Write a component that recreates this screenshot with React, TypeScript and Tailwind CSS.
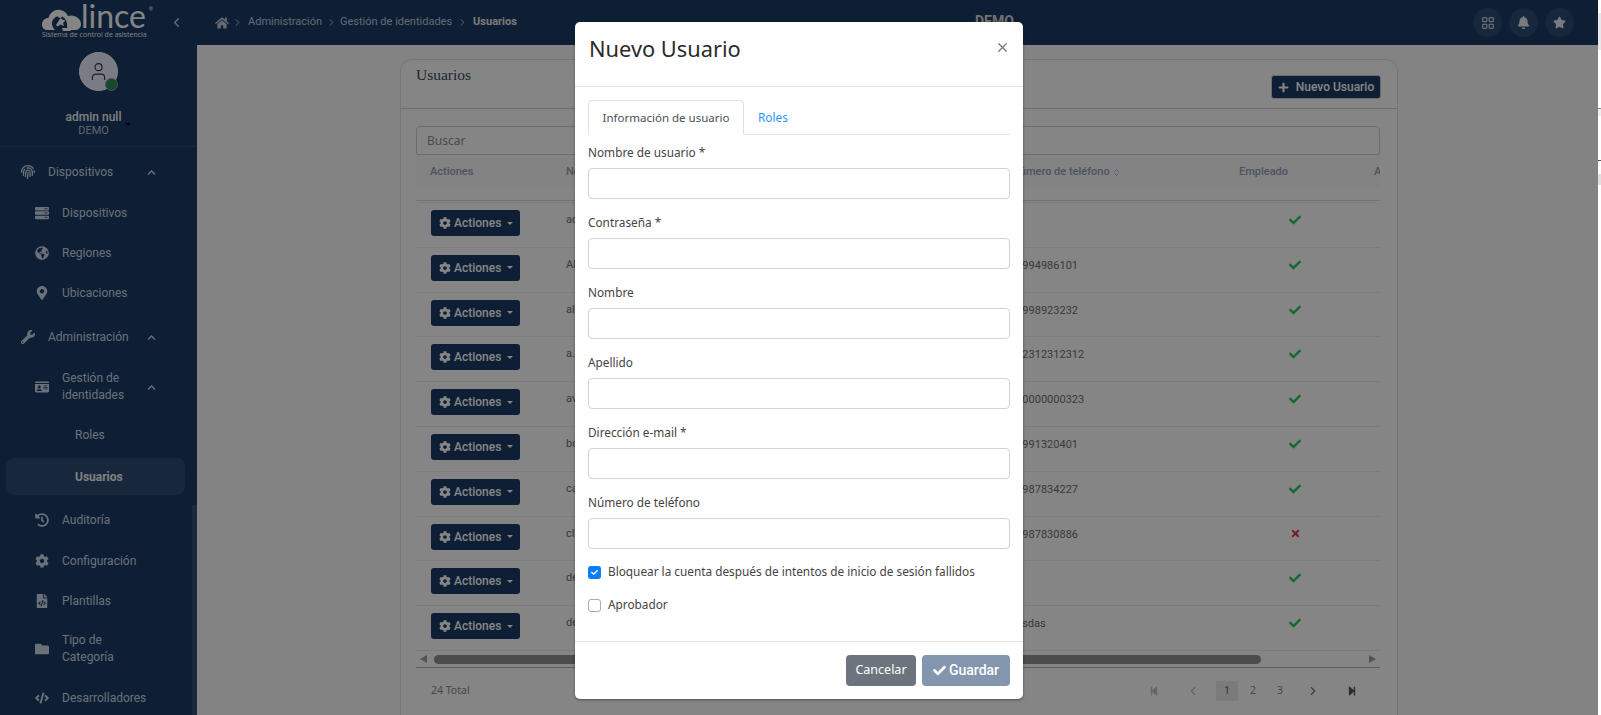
import { ChevronLeft, ChevronRight, ChevronsUpDown, LayoutGrid, User, X } from "lucide-react";
import {
  FaBell,
  FaCheck,
  FaChevronUp,
  FaCode,
  FaCog,
  FaFileCode,
  FaFingerprint,
  FaFolder,
  FaGlobeAmericas,
  FaHistory,
  FaHome,
  FaIdCard,
  FaMapMarkerAlt,
  FaPlus,
  FaServer,
  FaStar,
  FaStepBackward,
  FaStepForward,
  FaTimes,
  FaWrench,
} from "react-icons/fa";

const menu = [
  { label: "Dispositivos", Icon: FaFingerprint, level: 0, chevron: true, box: "h-10" },
  { label: "Dispositivos", Icon: FaServer, level: 1, box: "h-10 mt-px" },
  { label: "Regiones", Icon: FaGlobeAmericas, level: 1, box: "h-10" },
  { label: "Ubicaciones", Icon: FaMapMarkerAlt, level: 1, box: "h-10" },
  { label: "Administración", Icon: FaWrench, level: 0, chevron: true, box: "h-10 mt-1" },
  { label: "Gestión de identidades", Icon: FaIdCard, level: 1, chevron: true, box: "h-[52px] mt-1" },
  { label: "Roles", level: 2, box: "h-10 mt-[2px]" },
  { label: "Usuarios", level: 2, active: true, box: "h-[37px] mt-[3px]" },
  { label: "Auditoría", Icon: FaHistory, level: 1, box: "h-10 mt-[5px]" },
  { label: "Configuración", Icon: FaCog, level: 1, box: "h-10 mt-px" },
  { label: "Plantillas", Icon: FaFileCode, level: 1, box: "h-10" },
  { label: "Tipo de Categoría", Icon: FaFolder, level: 1, box: "h-[52px] mt-[2px]" },
  { label: "Desarrolladores", Icon: FaCode, level: 1, box: "h-10 mt-[3px]" },
];

const rows = [
  { name: "adm", phone: "", ok: true },
  { name: "Alb", phone: "51994986101", ok: true },
  { name: "ale", phone: "51998923232", ok: true },
  { name: "a.l", phone: "512312312312", ok: true },
  { name: "ava", phone: "510000000323", ok: true },
  { name: "bcr", phone: "51991320401", ok: true },
  { name: "car", phone: "51987834227", ok: true },
  { name: "cla", phone: "51987830886", ok: false },
  { name: "dem", phone: "", ok: true },
  { name: "dem", phone: "dasdas", ok: true },
];

const fields = [
  "Nombre de usuario *",
  "Contraseña *",
  "Nombre",
  "Apellido",
  "Dirección e-mail *",
  "Número de teléfono",
];

const Logo = () => (
  <div className="relative w-[108px] h-[32px] text-white">
    <svg viewBox="0 0 39 22" className="absolute left-0 top-[2px] w-[39px] h-[22px]" fill="currentColor">
      <path d="M5 21 C1.500 21 0 18 0 15.500 C0 11.500 3 9 6.500 9 C8 3.500 13 0 18 1 C22 1.500 24.500 4 26 7 C32 5 39 9 39 15 C39 19 36 21 33 21 L27 21 L25 18 C26 12 22 7 18 7 C13 7 9.500 11 10 15.500 C10.500 18 12 20 13 21 Z" />
      <path d="M14 16 L17.500 10.500 L18.700 9 L20 10.500 L23.500 11.500 L21 14 L22 17 L18.500 15.500 L15.500 17.500 Z" />
      <circle cx="18" cy="7" r="2" />
      <path d="M20 19 L27 19 L29 22 L21 22 Z" />
    </svg>
    <span className="absolute left-[39px] -top-[4px] font-['Lato',sans-serif] font-normal text-[32px] leading-[26px]">lince</span>
    <span className="absolute left-[107px] top-0 text-[5px] leading-none">®</span>
    <span className="absolute left-0 top-[23px] whitespace-nowrap font-['Open_Sans',sans-serif] text-[7px] leading-[9px] text-[#eff4ff]">
      Sistema de control de asistencia
    </span>
  </div>
);

const Sidebar = () => (
  <aside className="relative w-[197px] h-[670px] shrink-0 overflow-hidden bg-[#1b3c66] font-['Roboto',sans-serif] text-[12px] text-[#ccd8e8]">
    <div className="h-[102px] border-b border-[#2c4c78] flex flex-col items-center">
      <div className="relative mt-[7px] ml-[-1px] w-[39px] h-[39px] rounded-full bg-[#ebebff] border border-[#fff] flex items-center justify-center text-[#33384a]">
        <User size={21} strokeWidth={1.300} />
        <span className="absolute -right-px -bottom-px w-[13px] h-[13px] rounded-full border border-[#8fa096] bg-[#2e8b57]" />
      </div>
      <div className="relative mt-[19px] ml-[-10px] text-center leading-[14px]">
        <div className="text-[12px] font-medium text-[#f4f4f4]">admin null</div>
        <div className="text-[11px] text-[#b9c5d6]">DEMO</div>
        <span className="absolute -right-[10px] top-[13px] w-0 h-0 border-x-[3px] border-t-[3px] border-x-transparent border-t-black" />
      </div>
    </div>
    <nav className="mt-[5px]">
      {menu.map((item, i) => (
        <div
          key={i}
          className={`${item.box} flex items-center ${item.active ? "ml-[6px] w-[179px] pl-[69px] rounded-[8px] bg-[#2c4b73] font-bold text-[#f5f5f5]" : item.level === 2 ? "pl-[75px]" : item.level === 1 ? "pl-[34px]" : "pl-[20px]"}`}
        >
          {item.Icon && (
            <span className="w-[16px] flex justify-center">
              <item.Icon size={14} />
            </span>
          )}
          {item.level === 1 && <span className="ml-[12px] w-[84px] leading-[17px]">{item.label}</span>}
          {item.level === 0 && <span className="ml-[12px]">{item.label}</span>}
          {item.level === 2 && <span>{item.label}</span>}
          {item.chevron && <FaChevronUp size={9} className="ml-auto mr-[41px]" />}
        </div>
      ))}
    </nav>
    <span className="absolute right-0 top-[460px] bottom-0 w-[5px] bg-[#35507a]" />
  </aside>
);

const UsersCard = () => (
  <section className="w-[998px] h-[680px] ml-[203px] mt-[14px] shrink-0 rounded-t-[12px] border border-[#e1e1e1] bg-white">
    <div className="h-[49px] flex justify-between border-b border-[#d2d2d2] pl-[15px] pr-[16px]">
      <h2 className="mt-[3px] font-['Liberation_Serif',serif] text-[15.500px] text-[#3a4a62]">Usuarios</h2>
      <button className="mt-[15px] h-[24px] w-[110px] rounded-[3px] border border-[#d0d0d0] bg-[#1b3c66] flex items-center justify-center gap-[7px] font-['Roboto',sans-serif] text-[12px] font-medium text-white">
        <FaPlus size={11} />
        Nuevo Usuario
      </button>
    </div>
    <div className="pl-[15px] pr-[17px] pt-[17px]">
      <div className="h-[29px] rounded-t-[4px] rounded-b-[2px] border border-[#cfcfcf] flex items-center pl-[10px] font-['Noto_Sans',sans-serif] text-[12px] text-[#8f8f8f]">
        Buscar
      </div>
      <div className="overflow-hidden font-['Roboto',sans-serif]">
        <div className="h-[34px] w-[1100px] bg-[#fbfbfb] grid grid-cols-[150px_444px_229px_135px_100px] items-center text-[11px] font-medium text-[#93a0b6]">
          <span className="pl-[14px]">Actiones</span>
          <span>Nom</span>
          <span className="pl-[2px] flex items-center gap-[2px]">
            Número de teléfono <ChevronsUpDown size={9} />
          </span>
          <span>Empleado</span>
          <span className="whitespace-nowrap">Aprobador</span>
        </div>
        <div className="mt-[11px] border-t border-[#dadada] pt-px">
          <div className="border-t border-[#ececec] rounded-t-[6px]">
            {rows.map((row, i) => (
              <div key={i} className="h-[44.800px] border-b border-[#ececec] grid grid-cols-[150px_444px_229px_100px] w-[1100px] text-[11px] text-[#707070]">
                <div>
                  <button className="ml-[15px] mt-[7px] h-[26px] w-[89px] rounded-[3px] bg-[#1b3c66] flex items-center pl-[8px] text-[12px] font-medium text-white">
                    <FaCog size={12} />
                    <span className="ml-[3px]">Actiones</span>
                    <span className="ml-[6px] w-0 h-0 border-x-[3px] border-t-[3px] border-x-transparent border-t-white" />
                  </button>
                </div>
                <span className="mt-[9px]">{row.name}</span>
                <span className="mt-[10px]">{row.phone}</span>
                <span className="pl-[50px] pt-[11px]">
                  {row.ok ? <FaCheck size={12} className="text-[#2cc860]" /> : <FaTimes size={11} className="text-[#ee3048] ml-px" />}
                </span>
              </div>
            ))}
          </div>
        </div>
        <div className="relative h-[17px] border-b border-[#b5b5b5]">
          <span className="absolute left-[4px] top-[4px] w-0 h-0 border-y-[4.500px] border-r-[7px] border-y-transparent border-r-[#a2a2a2]" />
          <div className="absolute left-[18px] top-[4px] w-[827px] h-[9px] rounded-full bg-[#929292]" />
          <span className="absolute right-[4px] top-[4px] w-0 h-0 border-y-[4.500px] border-l-[7px] border-y-transparent border-l-[#a2a2a2]" />
        </div>
        <div className="h-[46px] flex items-center font-['Noto_Sans',sans-serif] text-[10.500px] text-[#8a8a8a]">
          <span className="ml-[15px]">24 Total</span>
          <div className="ml-auto mr-[23px] flex items-center text-[#8a8a8a]">
            <FaStepBackward size={10} className="text-[#c4c4c4]" />
            <ChevronLeft size={14} className="ml-[27px] text-[#c4c4c4]" />
            <span className="ml-[16px] w-[22px] h-[20px] rounded-[2px] bg-[#ebebeb] flex items-center justify-center text-[#666]">1</span>
            <span className="ml-[12px]">2</span>
            <span className="ml-[21px]">3</span>
            <ChevronRight size={14} className="ml-[23px] text-[#777]" />
            <FaStepForward size={10} className="ml-[27px] text-[#555]" />
          </div>
        </div>
      </div>
    </div>
  </section>
);

const TopBar = () => (
  <header className="h-[45px] bg-[#1b3c66] flex items-center font-['Roboto',sans-serif] text-[11px] text-[#bfcbdb]">
    <div className="w-[197px] h-full shrink-0 flex items-center pl-[42px]">
      <Logo />
      <ChevronLeft size={15} strokeWidth={2.500} className="ml-[19px] text-[#b9c9e0]" />
    </div>
    <div className="ml-[18px] w-[760px] flex items-center">
      <FaHome size={14} />
      <ChevronRight size={11} className="ml-[3px] mr-[5px]" />
      <span>Administración</span>
      <ChevronRight size={11} className="mx-[3.500px]" />
      <span>Gestión de identidades</span>
      <ChevronRight size={11} className="mx-[5px]" />
      <span className="font-bold text-[#e8e8e8]">Usuarios</span>
    </div>
    <span className="-mt-[2px] text-[14px] font-bold text-[#d8d8d8]">DEMO</span>
    <div className="ml-auto mr-[24px] flex gap-[7px] text-[#e6ebf3]">
      <span className="w-[29px] h-[29px] rounded-full bg-[#2c4b73] flex items-center justify-center">
        <LayoutGrid size={14} strokeWidth={1.800} />
      </span>
      <span className="w-[29px] h-[29px] rounded-full bg-[#2c4b73] flex items-center justify-center">
        <FaBell size={13} />
      </span>
      <span className="w-[29px] h-[29px] rounded-full bg-[#2c4b73] flex items-center justify-center">
        <FaStar size={13} />
      </span>
    </div>
  </header>
);

const Modal = () => (
  <div className="absolute left-[575px] top-[22px] w-[448px] h-[677px] rounded-[5px] bg-white shadow-[0_1px_3px_rgba(0,0,0,0.4)] flex flex-col font-['Noto_Sans',sans-serif] text-[11.800px] text-[#444]">
    <div className="h-[65px] shrink-0 border-b border-[#dee2e6] relative pl-[14px] pt-[9px]">
      <h1 className="text-[21.800px] leading-[36px] font-normal text-[#2b2b2b]">Nuevo Usuario</h1>
      <X size={15} strokeWidth={2} className="absolute right-[13px] top-[18px] text-[#777]" />
    </div>
    <div className="flex-1 px-[13px] pt-[13px]">
      <div className="h-[35px] flex border-b border-[#dee2e6]">
        <div className="w-[156px] h-[35px] pt-px rounded-t-[4px] border border-b-white border-[#dee2e6] bg-white flex items-center justify-center text-[11.500px] text-[#495057]">
          Información de usuario
        </div>
        <div className="ml-[14px] pt-px flex items-center text-[#2a96ff]">Roles</div>
      </div>
      <div className="mt-[8px]">
        {fields.map((label) => (
          <div key={label} className="h-[70px]">
            <label className="block h-[18px] leading-[18px] mb-[7px]">{label}</label>
            <input className="block w-full h-[31px] rounded-[4px] border border-[#ced4da] bg-white" />
          </div>
        ))}
      </div>
      <div className="flex items-center gap-[7px] h-[18px]">
        <span className="w-[13px] h-[13px] rounded-[3px] bg-[#0a7cff] flex items-center justify-center text-white">
          <FaCheck size={7} />
        </span>
        Bloquear la cuenta después de intentos de inicio de sesión fallidos
      </div>
      <div className="mt-[15px] flex items-center gap-[7px] h-[18px]">
        <span className="w-[13px] h-[13px] rounded-[3px] border border-[#a5adb5] bg-white" />
        Aprobador
      </div>
    </div>
    <div className="h-[58px] shrink-0 border-t border-[#dee2e6] flex justify-end gap-[6px] px-[13px] pt-[13px]">
      <button className="w-[70px] h-[31px] rounded-[4px] bg-[#6c757d] text-[12.500px] text-white">Cancelar</button>
      <button className="w-[88px] h-[31px] rounded-[4px] bg-[#8496ae] flex items-center justify-center gap-[3px] font-['Roboto',sans-serif] text-[14px] font-medium text-white">
        <FaCheck size={13} />
        Guardar
      </button>
    </div>
  </div>
);

const App = () => {
  return (
    <div className="flex w-full h-[715px] overflow-hidden bg-white">
      <div className="relative w-[1598px] h-[715px] shrink-0 overflow-hidden bg-[#fcfcfc]">
        <TopBar />
        <div className="flex">
          <Sidebar />
          <UsersCard />
        </div>
        <div className="absolute inset-0 bg-black/[0.48]" />
        <Modal />
      </div>
      <div className="flex-1 flex flex-col">
        <div className="h-[13px]" />
        <div className="h-[37px] bg-[#e8e8e8]" />
        <div className="h-[58px]" />
        <div className="h-[8px] border-t border-[#888] bg-[#eee]" />
        <div className="h-[44px]" />
        <div className="h-[14px] border-t border-[#555]" />
        <div className="h-[11px] bg-[#e0e0e0]" />
      </div>
    </div>
  );
};

export default App;
